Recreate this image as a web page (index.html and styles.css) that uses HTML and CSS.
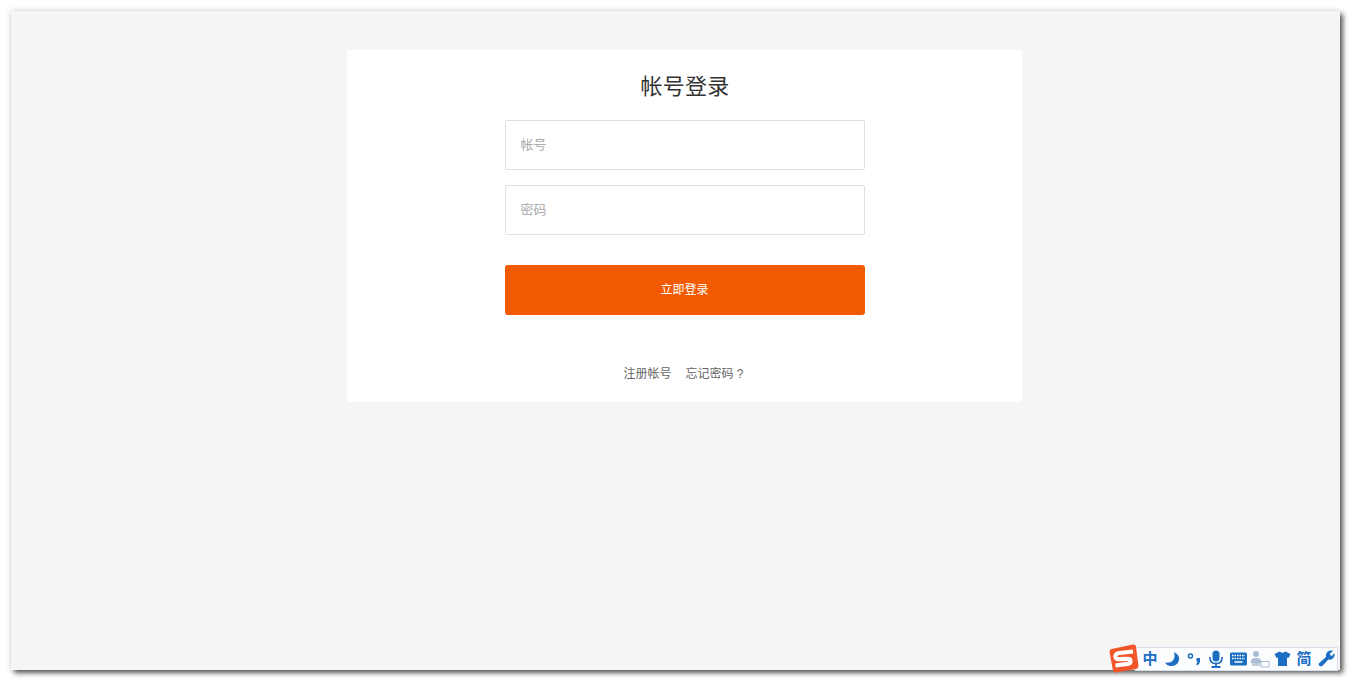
FILE: index.html
```html
<!DOCTYPE html>
<html lang="zh-CN">
<head>
    <meta charset="UTF-8">
    <title>帐号登录</title>
    <link rel="stylesheet" href="styles.css">
</head>
<body>
    <div class="window">
        <section class="login-card">
            <h2 class="login-title">帐号登录</h2>
            <form class="login-form">
                <input class="login-input" type="text" placeholder="帐号">
                <input class="login-input" type="password" placeholder="密码">
                <button class="login-btn" type="button">立即登录</button>
            </form>
            <div class="login-links">
                <a href="#">注册帐号</a>
                <a href="#">忘记密码 ?</a>
            </div>
        </section>
    </div>

    <!-- IME toolbar -->
    <div class="ime-bar">
        <svg class="ime-logo" width="30" height="29" viewBox="0 0 30 29">
            <path d="M2.500 5 L24 0.500 Q26.500 0 27 2.500 L29.500 22 Q29.500 24.500 27 25 L7 28.500 Q4.500 28.800 4 26.500 L0.500 8 Q0.300 5.500 2.500 5Z" fill="#f0562a"/>
            <path d="M24 7.500 L10.500 9 Q6 9.500 6.500 12.800 Q7 15.500 11 15.200 L18.500 14.800 Q21.500 14.800 21.500 17 Q21.500 19.500 18.500 19.800 L6.500 21.500" fill="none" stroke="#fff" stroke-width="4.200"/>
        </svg>
        <div class="ime-tools">
            <span class="ime-zh">中</span>
            <svg width="16" height="16" viewBox="0 0 16 16"><path d="M10 1 Q16 4 15 9 Q13.500 15 7 15 Q3 15 1 11.500 Q6 12.500 9 9.500 Q11.500 6 10 1Z" fill="#1b6ec2"/></svg>
            <svg width="14" height="16" viewBox="0 0 14 16"><circle cx="3.500" cy="5" r="2" fill="none" stroke="#1b6ec2" stroke-width="1.500"/><path d="M9.500 7 h3.500 v3 q0 3 -3.500 4.500 l0 -2 q1 -1 1 -2 h-1z" fill="#1b6ec2"/></svg>
            <svg width="16" height="18" viewBox="0 0 16 18"><rect x="4.500" y="0.500" width="7" height="11" rx="3.500" fill="#1b6ec2"/><path d="M2 7 v1 q0 5.500 6 5.500 q6 0 6 -5.500 v-1" fill="none" stroke="#1b6ec2" stroke-width="1.600"/><path d="M8 13 v3 M3.500 17 h9" stroke="#1b6ec2" stroke-width="1.800"/></svg>
            <svg width="17" height="14" viewBox="0 0 17 14"><rect x="0" y="0.500" width="17" height="13" rx="1.500" fill="#1b6ec2"/><path d="M2 3.500 h13 M2 6.500 h13" stroke="#fff" stroke-width="1.400" stroke-dasharray="1.500 1"/><path d="M4.500 10 h8" stroke="#fff" stroke-width="1.500"/></svg>
            <svg width="20" height="18" viewBox="0 0 20 18"><circle cx="6" cy="4" r="3" fill="#a9bcd4"/><path d="M1 11 Q1 8 6 8 Q11 8 11 11 V13 H1Z" fill="#a9bcd4"/><rect x="2" y="13" width="8" height="3" fill="#c3cfdf"/><rect x="11" y="11.500" width="8" height="5.500" fill="none" stroke="#a9bcd4"/></svg>
            <svg width="17" height="15" viewBox="0 0 17 15"><path d="M5.500 0.500 L8.500 2 L11.500 0.500 L16.500 3 L14.500 7 L13 6.500 V15 H4 V6.500 L2.500 7 L0.500 3Z" fill="#1b6ec2"/></svg>
            <span class="ime-zh">简</span>
            <svg width="17" height="17" viewBox="0 0 16 16"><path d="M0.500 13 L7.500 6.500 Q7 2.500 10.500 0.800 Q13 0 14.500 0.800 L11 3.500 L12.500 5.800 L15.500 3 Q16.200 6.500 13.500 8.500 Q11.500 9.500 9.800 9 L3.800 15.200 Q0.500 16 0.500 13Z" fill="#1b6ec2"/></svg>
        </div>
    </div>
</body>
</html>
```

FILE: styles.css
```css
/* General */
html, body {
    height: 100%;
}
body {
    margin: 0;
    padding: 11px;
    box-sizing: border-box;
    background-color: #fff;
    font-family: "Liberation Sans", "Noto Sans CJK SC", sans-serif;
    overflow: hidden;
}

/* Window with its drop shadow */
.window {
    height: 659px;
    width: 1329px;
    padding-top: 39px;
    box-sizing: border-box;
    background-color: #f5f5f5;
    box-shadow: 3px 3px 5px rgba(0, 0, 0, 0.65), -1px -1px 6px rgba(0, 0, 0, 0.1);
}

/* Login card */
.login-card {
    width: 675px;
    height: 352px;
    margin-left: 336px;
    box-sizing: border-box;
    padding-top: 22px;
    background-color: #fff;
    border-radius: 3px;
}
.login-title {
    margin: 0;
    height: 29px;
    padding-left: 1px;
    line-height: 29px;
    font-size: 22px;
    font-weight: normal;
    letter-spacing: 0.3px;
    text-align: center;
    color: #333;
}
.login-form {
    display: flex;
    flex-direction: column;
    width: 360px;
    margin: 19px auto 0;
}
.login-input {
    height: 50px;
    margin-bottom: 15px;
    padding: 0 15px 2px;
    box-sizing: border-box;
    border: 1px solid #e0e0e0;
    border-radius: 2px;
    background-color: #fff;
    font-family: inherit;
    font-size: 13px;
}
.login-input::placeholder {
    color: #aaa;
}
.login-btn {
    height: 50px;
    margin-top: 15px;
    padding-bottom: 5px;
    border: none;
    border-radius: 3px;
    background-color: #f15a00;
    color: #fff;
    font-family: inherit;
    font-size: 12px;
    cursor: pointer;
}
.login-links {
    display: flex;
    justify-content: center;
    gap: 14px;
    margin-top: 50px;
    padding-right: 2px;
    line-height: 18px;
    font-size: 12px;
}
.login-links a {
    color: #666;
    text-decoration: none;
}

/* IME toolbar */
.ime-bar {
    position: absolute;
    left: 1109px;
    top: 644px;
    width: 229px;
    height: 28px;
}
.ime-logo {
    position: absolute;
    left: 0;
    top: 0;
    z-index: 1;
}
.ime-tools {
    position: absolute;
    left: 26px;
    top: 3px;
    width: 203px;
    height: 24px;
    padding: 0 0 1px 3px;
    box-sizing: border-box;
    display: grid;
    grid-template-columns: repeat(9, 22px);
    align-items: center;
    justify-items: center;
    background-color: #fbfdff;
    border: 1px solid #d5e0ec;
}
.ime-zh {
    font-size: 15px;
    line-height: 18px;
    font-weight: bold;
    color: #1b6ec2;
}
```
